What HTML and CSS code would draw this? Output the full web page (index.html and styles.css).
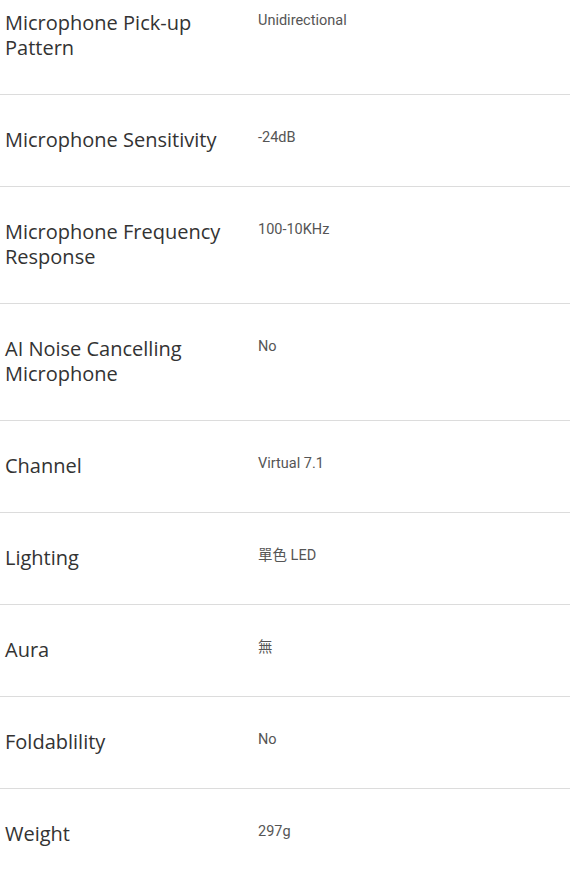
FILE: index.html
```html
<!DOCTYPE html>
<html lang="zh-Hant">
<head>
<meta charset="utf-8">
<link rel="stylesheet" href="styles.css">
</head>
<body>
<div class="specs">
  <div class="row"><div class="label">Microphone Pick-up Pattern</div><div class="value">Unidirectional</div></div>
  <div class="row"><div class="label">Microphone Sensitivity</div><div class="value">-24dB</div></div>
  <div class="row"><div class="label">Microphone Frequency Response</div><div class="value">100-10KHz</div></div>
  <div class="row"><div class="label">AI Noise Cancelling Microphone</div><div class="value">No</div></div>
  <div class="row"><div class="label">Channel</div><div class="value">Virtual 7.1</div></div>
  <div class="row"><div class="label">Lighting</div><div class="value">單色 LED</div></div>
  <div class="row"><div class="label">Aura</div><div class="value">無</div></div>
  <div class="row"><div class="label">Foldablility</div><div class="value">No</div></div>
  <div class="row"><div class="label">Weight</div><div class="value">297g</div></div>
</div>
</body>
</html>
```
FILE: styles.css
```css
html, body {
  margin: 0;
  padding: 0;
  background: #ffffff;
}
.specs {
  margin-top: -22px;
}
.row {
  display: grid;
  grid-template-columns: 253px 1fr;
  padding: 32px 0 34px 5px;
  border-bottom: 1px solid #dcdcdc;
}
.label {
  font-family: "Open Sans", sans-serif;
  font-size: 20px;
  line-height: 25px;
  color: #333333;
  padding-right: 20px;
}
.value {
  font-family: Roboto, "Noto Sans CJK TC", sans-serif;
  font-size: 14.5px;
  line-height: 21px;
  color: #555555;
}
```
